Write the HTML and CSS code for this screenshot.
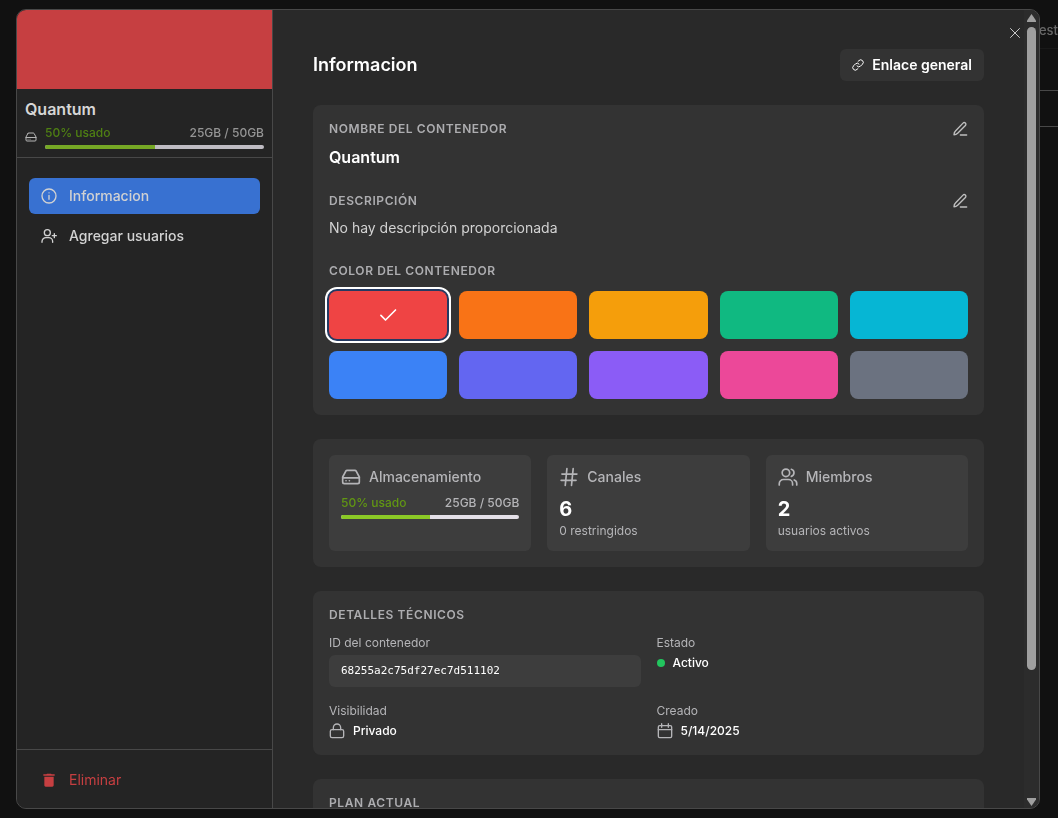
FILE: index.html
```html
<!DOCTYPE html>
<html lang="es">
<head>
    <meta charset="UTF-8">
    <meta name="viewport" content="width=device-width, initial-scale=1.0">
    <title>Quantum</title>
    <link rel="stylesheet" href="styles.css">
</head>
<body>
    <div class="backdrop">
        <div class="backdrop-bar">est</div>
        <div class="backdrop-row"></div>
        <div class="backdrop-row backdrop-row-small"></div>
    </div>

    <div class="modal" role="dialog" aria-labelledby="modal-title">
        <aside class="sidebar">
            <div class="cover"></div>
            <div class="summary">
                <h2 class="summary-name">Quantum</h2>
                <div class="summary-usage">
                    <svg class="icon icon-xs" viewBox="0 0 24 24"><path d="M22 13H2"/><path d="M5.500 5.500 2 12v6a2 2 0 0 0 2 2h16a2 2 0 0 0 2-2v-6l-3.500-6.500A2 2 0 0 0 16.800 4H7.200a2 2 0 0 0-1.700 1.500z"/><path d="M6 16.500h.1M10 16.500h.1"/></svg>
                    <div class="usage">
                        <div class="usage-text"><span class="usage-percent">50% usado</span><span>25GB / 50GB</span></div>
                        <div class="bar"><div class="bar-fill" style="width: 50%"></div></div>
                    </div>
                </div>
            </div>
            <nav class="nav">
                <button type="button" class="nav-item active">
                    <svg class="icon icon-sm" viewBox="0 0 24 24"><circle cx="12" cy="12" r="10.500"/><path d="M12 11v6M12 7.200h.1"/></svg>
                    Informacion
                </button>
                <button type="button" class="nav-item">
                    <svg class="icon icon-sm" viewBox="0 0 24 24"><circle cx="9.500" cy="7" r="4.500"/><path d="M1.500 21.500v-1a6 6 0 0 1 6-6h4a6 6 0 0 1 6 6v1"/><path d="M20 8.500v6M17 11.500h6"/></svg>
                    Agregar usuarios
                </button>
            </nav>
            <div class="sidebar-footer">
                <button type="button" class="nav-item delete">
                    <svg class="icon-trash" viewBox="0 0 24 24"><path d="M5 20c0 1.100.9 2 2 2h10c1.100 0 2-.9 2-2V7H5zM20.500 3.500H16l-1-1H9l-1 1H3.500v2h17z"/></svg>
                    Eliminar
                </button>
            </div>
        </aside>

        <main class="content">
            <header class="content-header">
                <h1 id="modal-title">Informacion</h1>
                <button type="button" class="link-button">
                    <svg class="icon icon-xs" viewBox="0 0 24 24"><path d="M10 14a5 5 0 0 0 7 .3l4-4a5 5 0 0 0-7.100-7.100L12 5"/><path d="M14 10a5 5 0 0 0-7-.3l-4 4a5 5 0 0 0 7.100 7.100L12 19"/></svg>
                    Enlace general
                </button>
            </header>

            <section class="card general">
                <div class="field">
                    <div class="field-header">
                        <h3>NOMBRE DEL CONTENEDOR</h3>
                        <button type="button" class="edit" aria-label="Editar nombre">
                            <svg class="icon icon-sm" viewBox="0 0 24 24"><path d="M12.500 21H22"/><path d="M16.500 3.200a2.500 2.500 0 0 1 3.600 3.500L8.500 18.300C7 19.800 5 20.600 3 20.600c0-2 .7-4 2.200-5.500z"/></svg>
                        </button>
                    </div>
                    <p class="name">Quantum</p>
                </div>
                <div class="field">
                    <div class="field-header">
                        <h3>DESCRIPCIÓN</h3>
                        <button type="button" class="edit" aria-label="Editar descripción">
                            <svg class="icon icon-sm" viewBox="0 0 24 24"><path d="M12.500 21H22"/><path d="M16.500 3.200a2.500 2.500 0 0 1 3.600 3.500L8.500 18.300C7 19.800 5 20.600 3 20.600c0-2 .7-4 2.200-5.500z"/></svg>
                        </button>
                    </div>
                    <p class="description">No hay descripción proporcionada</p>
                </div>
                <div class="field-colors">
                    <h3>COLOR DEL CONTENEDOR</h3>
                    <div class="swatches">
                        <button type="button" class="swatch red selected" aria-label="Rojo">
                            <svg class="icon icon-md" viewBox="0 0 24 24"><path d="m3.500 12.500 5.500 5.500L21 6"/></svg>
                        </button>
                        <button type="button" class="swatch orange" aria-label="Naranja"></button>
                        <button type="button" class="swatch amber" aria-label="Ámbar"></button>
                        <button type="button" class="swatch green" aria-label="Verde"></button>
                        <button type="button" class="swatch cyan" aria-label="Cian"></button>
                        <button type="button" class="swatch blue" aria-label="Azul"></button>
                        <button type="button" class="swatch indigo" aria-label="Índigo"></button>
                        <button type="button" class="swatch violet" aria-label="Violeta"></button>
                        <button type="button" class="swatch pink" aria-label="Rosa"></button>
                        <button type="button" class="swatch gray" aria-label="Gris"></button>
                    </div>
                </div>
            </section>

            <section class="card stats">
                <div class="stat">
                    <div class="stat-title">
                        <svg class="icon icon-lg" viewBox="0 0 24 24"><path d="M22 13H2"/><path d="M5.500 5.500 2 12v6a2 2 0 0 0 2 2h16a2 2 0 0 0 2-2v-6l-3.500-6.500A2 2 0 0 0 16.800 4H7.200a2 2 0 0 0-1.700 1.500z"/><path d="M6 16.500h.1M10 16.500h.1"/></svg>
                        Almacenamiento
                    </div>
                    <div class="usage">
                        <div class="usage-text"><span class="usage-percent">50% usado</span><span>25GB / 50GB</span></div>
                        <div class="bar"><div class="bar-fill" style="width: 50%"></div></div>
                    </div>
                </div>
                <div class="stat">
                    <div class="stat-title">
                        <svg class="icon icon-lg" viewBox="0 0 24 24"><path d="M3.500 8.500h18M2.500 16h18M9.500 2l-2 20M17 2l-2 20"/></svg>
                        Canales
                    </div>
                    <p class="stat-value">6</p>
                    <p class="stat-note">0 restringidos</p>
                </div>
                <div class="stat">
                    <div class="stat-title">
                        <svg class="icon icon-lg" viewBox="0 0 24 24"><circle cx="9.500" cy="7" r="4.500"/><path d="M1.500 21.500V20a5 5 0 0 1 5-5h6a5 5 0 0 1 5 5v1.500"/><path d="M16 2.700a4.500 4.500 0 0 1 0 8.600M19.500 15.500a4.500 4.500 0 0 1 3 4.200v1.800"/></svg>
                        Miembros
                    </div>
                    <p class="stat-value">2</p>
                    <p class="stat-note">usuarios activos</p>
                </div>
            </section>

            <section class="card details">
                <h3>DETALLES TÉCNICOS</h3>
                <dl class="details-grid">
                    <div class="detail">
                        <dt>ID del contenedor</dt>
                        <dd class="container-id">68255a2c75df27ec7d511102</dd>
                    </div>
                    <div class="detail">
                        <dt>Estado</dt>
                        <dd><span class="dot"></span>Activo</dd>
                    </div>
                    <div class="detail">
                        <dt>Visibilidad</dt>
                        <dd><svg class="icon icon-sm" viewBox="0 0 24 24"><rect x="2" y="10" width="20" height="12" rx="2.500"/><path d="M6.500 10V7a5.500 5.500 0 0 1 11 0v3"/></svg>Privado</dd>
                    </div>
                    <div class="detail">
                        <dt>Creado</dt>
                        <dd><svg class="icon icon-sm" viewBox="0 0 24 24"><rect x="2" y="4" width="20" height="18" rx="2"/><path d="M2 10h20M7 1v5.500M17 1v5.500"/></svg>5/14/2025</dd>
                    </div>
                </dl>
            </section>

            <section class="card">
                <h3>PLAN ACTUAL</h3>
            </section>
        </main>

        <div class="scrollbar" aria-hidden="true">
            <svg class="arrow" viewBox="0 0 9 8"><path d="M4.500 0 9 6.500V8H0V6.500z"/></svg>
            <div class="track"><div class="thumb"></div></div>
            <svg class="arrow" viewBox="0 0 9 8"><path d="M4.500 8 9 1.500V0H0v1.500z"/></svg>
        </div>

        <button type="button" class="close" aria-label="Cerrar">
            <svg class="icon icon-xs" viewBox="0 0 24 24"><path d="M3 3l18 18M21 3 3 21"/></svg>
        </button>
    </div>
</body>
</html>
```
FILE: styles.css
```css
*{
    margin: 0;
    padding: 0;
    box-sizing: border-box;
}
body{
    height: 100vh;
    padding: 9px 18px 9px 16px;
    background-color: #111;
    color: #fff;
    font-family: Inter, "Liberation Sans", sans-serif;
    font-size: 12px;
    line-height: 16px;
    overflow: hidden;
}
button{
    border: none;
    background-color: transparent;
    color: inherit;
    font: inherit;
    cursor: pointer;
}
h3{
    color: #adadb0;
    font-size: 12px;
    font-weight: 600;
    letter-spacing: 0.05em;
}

/* page behind the modal */
.backdrop{
    position: fixed;
    inset: 0 0 0 50%;
    color: #686868;
    font-size: 13px;
    font-weight: 500;
    text-align: right;
}
.backdrop-bar{
    height: 49px;
    padding-top: 22px;
    border-bottom: 1px solid #191919;
}
.backdrop-row{
    height: 42px;
    border-bottom: 1px solid #484848;
}
.backdrop-row-small{
    height: 36px;
}

.modal{
    position: relative;
    display: flex;
    height: 100%;
    background-color: #292929;
    border: 1px solid #484848;
    border-radius: 10px;
    overflow: hidden;
}

/* icons */
.icon{
    flex: none;
    fill: none;
    stroke: currentColor;
    stroke-width: 2;
    stroke-linecap: round;
    stroke-linejoin: round;
}
.icon-xs{
    width: 12px;
    height: 12px;
}
.icon-sm{
    width: 16px;
    height: 16px;
}
.icon-md,
.icon-lg{
    width: 20px;
    height: 20px;
}

/* sidebar */
.sidebar{
    display: flex;
    flex-direction: column;
    flex: none;
    width: 256px;
    background-color: #242424;
    border-right: 1px solid #484848;
}
.cover{
    height: 79px;
    background-color: #c63f41;
}
.summary{
    padding: 8px;
    border-bottom: 1px solid #484848;
}
.summary-name{
    margin-bottom: 4px;
    color: #d6d6d6;
    font-size: 16px;
    font-weight: 600;
    line-height: 24px;
}
.summary-usage{
    display: flex;
    align-items: center;
    gap: 8px;
    color: #b5b5b5;
}
.usage{
    flex: 1;
}
.usage-text{
    display: flex;
    justify-content: space-between;
    margin-bottom: 4px;
    font-weight: 500;
}
.usage-percent{
    color: #619613;
}
.bar{
    height: 4px;
    background-color: #e4e0e8;
    border-radius: 2px;
    overflow: hidden;
}
.bar-fill{
    height: 100%;
    background-color: #8bc926;
}
.summary .usage-text{
    color: #959595;
}
.summary .usage-percent{
    color: #4f8013;
}
.summary .bar{
    background-color: #bfbcc3;
}
.summary .bar-fill{
    background-color: #76a825;
}
.nav{
    display: flex;
    flex: 1;
    flex-direction: column;
    gap: 4px;
    padding: 20px 12px;
}
.nav-item{
    display: flex;
    align-items: center;
    gap: 12px;
    width: 100%;
    height: 36px;
    padding: 0 12px;
    border-radius: 6px;
    color: #d2d2d2;
    font-size: 14px;
    font-weight: 500;
}
.nav-item.active{
    background-color: #3871d1;
}
.sidebar-footer{
    padding: 12px 12px 10px;
    border-top: 1px solid #484848;
}
.nav-item.delete{
    color: #c63f41;
    font-weight: 400;
}
.icon-trash{
    width: 16px;
    height: 16px;
    fill: currentColor;
}

/* content */
.content{
    flex: 1;
    min-width: 0;
    padding: 39px 40px;
    overflow: hidden;
}
.content-header{
    display: flex;
    align-items: center;
    justify-content: space-between;
    margin-bottom: 24px;
}
.content-header h1{
    font-size: 18px;
    font-weight: 600;
}
.link-button{
    display: flex;
    align-items: center;
    gap: 8px;
    height: 32px;
    padding: 0 12px;
    background-color: #333;
    border-radius: 6px;
    font-size: 14px;
    font-weight: 600;
}
.card{
    margin-bottom: 24px;
    padding: 16px;
    background-color: #333;
    border-radius: 8px;
}
.field{
    margin-bottom: 24px;
}
.field-header{
    display: flex;
    justify-content: space-between;
    margin-bottom: 8px;
}
.edit{
    display: flex;
    color: #c0c0c0;
}
.name{
    font-size: 16px;
    font-weight: 600;
    line-height: 24px;
}
.description{
    color: #d2d2d2;
    font-size: 14px;
    line-height: 22px;
}
.swatches{
    display: grid;
    grid-template-columns: repeat(5, 1fr);
    gap: 12px;
    margin-top: 12px;
}
.swatch{
    display: flex;
    align-items: center;
    justify-content: center;
    height: 48px;
    border-radius: 8px;
}
.swatch.selected{
    box-shadow: 0 0 0 2px #253a62, 0 0 0 4px #fff;
}
.red{
    background-color: #ef4444;
}
.orange{
    background-color: #f97316;
}
.amber{
    background-color: #f59e0b;
}
.green{
    background-color: #10b981;
}
.cyan{
    background-color: #06b6d4;
}
.blue{
    background-color: #3b82f6;
}
.indigo{
    background-color: #6366f1;
}
.violet{
    background-color: #8b5cf6;
}
.pink{
    background-color: #ec4899;
}
.gray{
    background-color: #6b7280;
}

.stats{
    display: grid;
    grid-template-columns: repeat(3, 1fr);
    gap: 16px;
}
.stat{
    padding: 12px;
    background-color: #3d3d3d;
    border-radius: 6px;
    color: #b5b5b8;
}
.stat-title{
    display: flex;
    align-items: center;
    gap: 8px;
    margin-bottom: 8px;
    font-size: 14px;
    font-weight: 500;
    line-height: 20px;
}
.stat-value{
    color: #fff;
    font-size: 20px;
    font-weight: 700;
    line-height: 28px;
}

.details-grid{
    display: grid;
    grid-template-columns: repeat(2, 1fr);
    gap: 16px;
    margin-top: 12px;
}
.detail dt{
    margin-bottom: 4px;
    color: #b5b5b8;
}
.detail dd{
    display: flex;
    align-items: center;
    gap: 8px;
    font-weight: 500;
}
.detail .icon{
    color: #b5b5b8;
}
.detail .container-id{
    padding: 8px 12px;
    background-color: #3d3d3d;
    border-radius: 6px;
    font-family: "DejaVu Sans Mono", "Liberation Mono", monospace;
    font-size: 11px;
}
.dot{
    width: 8px;
    height: 8px;
    background-color: #22c55e;
    border-radius: 50%;
}

/* scrollbar */
.scrollbar{
    display: flex;
    flex-direction: column;
    align-items: center;
    gap: 5px;
    width: 15px;
    padding: 4px 0 2px;
    background-color: #2c2c2c;
}
.arrow{
    width: 9px;
    height: 8px;
    fill: #9f9f9f;
}
.track{
    flex: 1;
}
.thumb{
    width: 9px;
    height: 84%;
    background-color: #9f9f9f;
    border-radius: 5px;
}
.close{
    position: absolute;
    top: 17px;
    right: 18px;
    display: flex;
    color: #c8c8c8;
}
```
